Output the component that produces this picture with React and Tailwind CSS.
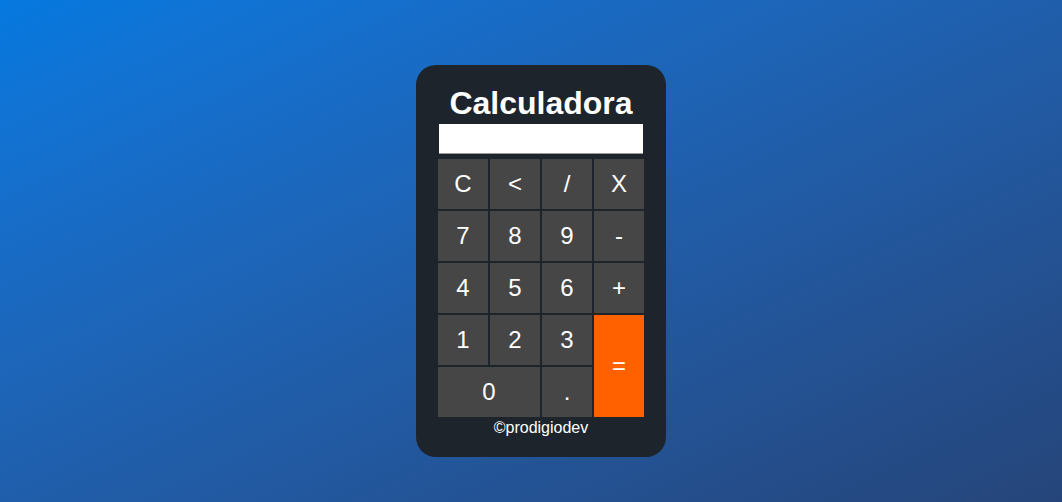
import React, { useState } from 'react';

const KEYS = [
  { label: 'C' },
  { label: '<' },
  { label: '/' },
  { label: 'X' },
  { label: '7' },
  { label: '8' },
  { label: '9' },
  { label: '-' },
  { label: '4' },
  { label: '5' },
  { label: '6' },
  { label: '+' },
  { label: '1' },
  { label: '2' },
  { label: '3' },
  { label: '=', span: 'row-span-2', bg: 'bg-[#ff6000]' },
  { label: '0', span: 'col-span-2' },
  { label: '.' },
];

const App = () => {
  const [display, setDisplay] = useState('');

  const press = (key) => {
    if (key === 'C') return setDisplay('');
    if (key === '<') return setDisplay((d) => d.slice(0, -1));
    if (key === '=') {
      try {
        // eslint-disable-next-line no-new-func
        const out = Function(`return (${display.replace(/X/g, '*')})`)();
        setDisplay(String(out));
      } catch {
        setDisplay('');
      }
      return;
    }
    setDisplay((d) => d + key);
  };

  return (
    <div className="min-h-[502px] w-full bg-linear-to-br from-[#0579e0] to-[#25457a] flex justify-center pl-[20px] pt-[65px] font-['Liberation_Sans',Arial,sans-serif]">
      <div className="w-[250px] h-[392px] bg-[#1d242c] rounded-[20px] flex flex-col items-center pt-[20px]">
        <h1 className="text-[32px] leading-[36px] font-bold text-white">Calculadora</h1>

        {/* Display */}
        <input
          value={display}
          readOnly
          className="mt-[3px] w-[204px] h-[30px] bg-white border-b border-[#9a9a9a] outline-none text-right px-2 text-lg text-black"
        />

        {/* Keypad */}
        <div className="mt-[5px] grid grid-cols-[repeat(4,50px)] auto-rows-[50px] gap-[2px]">
          {KEYS.map((k) => (
            <button
              key={k.label}
              onClick={() => press(k.label)}
              className={`flex items-center justify-center text-[24px] text-white ${k.span || ''} ${k.bg || 'bg-[#464646]'}`}
            >
              {k.label}
            </button>
          ))}
        </div>

        <p className="mt-[2px] text-[16px] leading-[18px] text-white">©prodigiodev</p>
      </div>
    </div>
  );
};

export default App;
